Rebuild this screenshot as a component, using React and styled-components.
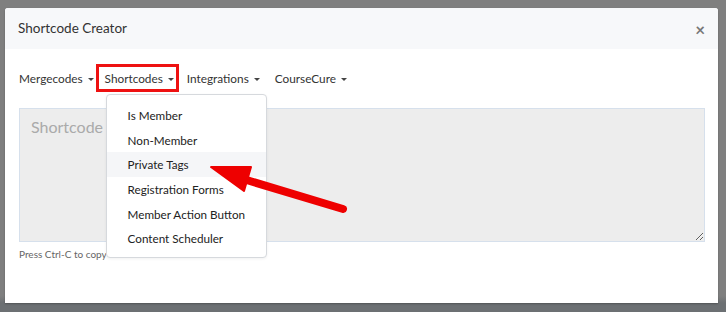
import React from "react";
import styled, { createGlobalStyle } from "styled-components";

const Global = createGlobalStyle`
  html, body { margin: 0; padding: 0; }
  body {
    width: 726px; height: 312px; overflow: hidden;
    background: linear-gradient(#7f7f7f 0, #7f7f7f 296px, #6c7073 303px, #6c7073 312px);
    font-family: Lato, "Open Sans", sans-serif;
  }
`;

const Backdrop = styled.div`
  position: relative;
  width: 726px;
  height: 312px;
  padding: 8px 0 0 5px;
  box-sizing: border-box;
`;

const Modal = styled.div`
  position: relative;
  width: 713px;
  height: 295px;
  background: #fff;
  border-radius: 3px 3px 0 0;
  display: flex;
  flex-direction: column;
  box-shadow: 0 1px 2px rgba(0,0,0,0.25);
`;

const Header = styled.div`
  height: 39px;
  background: #f7f8fa;
  display: flex;
  align-items: center;
  justify-content: space-between;
  padding: 0 13px 2px 13px;
  border-radius: 3px 3px 0 0;
`;

const Title = styled.div`
  font-size: 13.5px;
  color: #333;
`;

const Close = styled.div`
  font-size: 17px;
  font-weight: 700;
  color: #777;
  line-height: 1;
  margin-top: 4px;
`;

const Body = styled.div`
  padding: 15px 13px 0 14px;
  display: flex;
  flex-direction: column;
`;

const Nav = styled.div`
  display: flex;
  align-items: center;
  height: 28px;
`;

const NavItem = styled.div`
  position: relative;
  display: flex;
  align-items: center;
  font-size: 11.8px;
  color: #333;
  height: 28px;
  box-sizing: border-box;
  padding: 0 7px 0 8px;
  &:first-child { padding-left: 0; padding-right: 2px; }
`;

const BoxedItem = styled(NavItem)`
  padding: 0 2px 0 6px;
  border: 3px solid #ee1111;
`;

const Caret = styled.span`
  display: inline-block;
  width: 0; height: 0;
  margin-left: 5px;
  border-left: 3px solid transparent;
  border-right: 3px solid transparent;
  border-top: 3px solid #444;
  transform: translateY(1px);
`;

const Menu = styled.div`
  position: absolute;
  top: 27px;
  left: 7px;
  width: 159px;
  background: #fff;
  border: 1px solid #d6d9dd;
  border-radius: 4px;
  padding: 8px 0 6px;
  z-index: 5;
  box-shadow: 0 1px 3px rgba(0,0,0,0.06);
`;

const MenuItem = styled.div`
  height: 24.7px;
  line-height: 24.7px;
  padding-left: 21px;
  font-size: 11.7px;
  color: #222;
  white-space: nowrap;
  background: ${p => (p.$active ? "#f5f6f8" : "transparent")};
`;

const Area = styled.textarea`
  margin-top: 16px;
  width: 686px;
  height: 134px;
  box-sizing: border-box;
  background: #ededed;
  border: 1px solid #d6e0ec;
  padding: 8px 11px;
  font-family: Lato, "Open Sans", sans-serif;
  font-size: 16px;
  resize: both;
  outline: none;
  &::placeholder { color: #aaa; }
`;

const Hint = styled.div`
  font-size: 10px;
  color: #666;
  margin-top: 6px;
`;

const ArrowSvg = styled.svg`
  position: absolute;
  left: 0;
  top: 0;
  pointer-events: none;
  z-index: 10;
`;

export default function App() {
  const items = [
    "Is Member",
    "Non-Member",
    "Private Tags",
    "Registration Forms",
    "Member Action Button",
    "Content Scheduler",
  ];
  return (
    <>
      <Global />
      <Backdrop>
        <Modal>
          <Header>
            <Title>Shortcode Creator</Title>
            <Close>×</Close>
          </Header>
          <Body>
            <Nav>
              <NavItem>Mergecodes<Caret /></NavItem>
              <BoxedItem>
                Shortcodes<Caret />
                <Menu>
                  {items.map(t => (
                    <MenuItem key={t} $active={t === "Private Tags"}>{t}</MenuItem>
                  ))}
                </Menu>
              </BoxedItem>
              <NavItem>Integrations<Caret /></NavItem>
              <NavItem>CourseCure<Caret /></NavItem>
            </Nav>
            <Area placeholder="Shortcode will appear here" readOnly />
            <Hint>Press Ctrl-C to copy the shortcode</Hint>
          </Body>
        </Modal>
        <ArrowSvg width="726" height="312" viewBox="0 0 726 312">
          <line x1="343" y1="209" x2="240" y2="178" stroke="#ee0000" strokeWidth="8" strokeLinecap="round" />
          <polygon points="211,167 251,167 244,191" fill="#ee0000" stroke="#ee0000" strokeWidth="2" strokeLinejoin="round" />
        </ArrowSvg>
      </Backdrop>
    </>
  );
}
